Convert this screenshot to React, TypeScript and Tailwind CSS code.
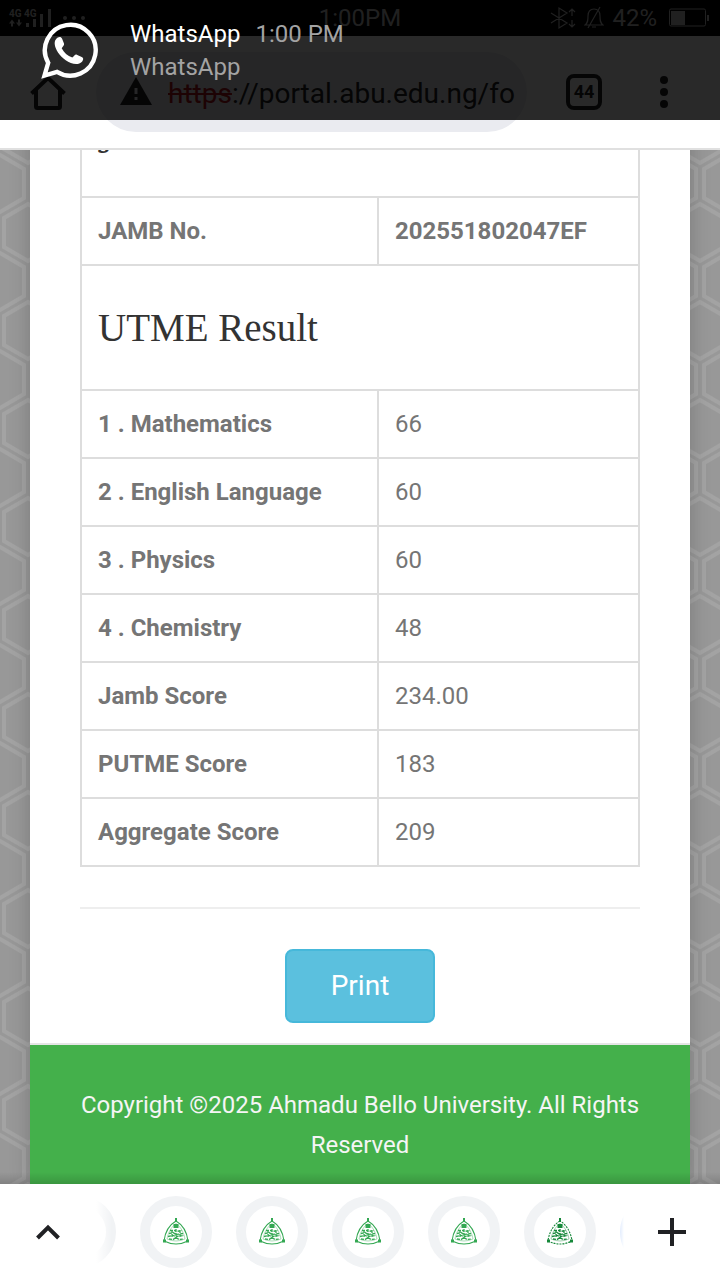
import React from "react";

const results: { label: string; value: string }[] = [
  { label: "1 . Mathematics", value: "66" },
  { label: "2 . English Language", value: "60" },
  { label: "3 . Physics", value: "60" },
  { label: "4 . Chemistry", value: "48" },
  { label: "Jamb Score", value: "234.00" },
  { label: "PUTME Score", value: "183" },
  { label: "Aggregate Score", value: "209" },
];

function SignalIcon() {
  return (
    <svg width="80" height="24" viewBox="0 0 80 24" aria-hidden="true" fill="#c4c4c4">
      <text x="1" y="11" fontSize="10" fontWeight="700" fontFamily="Roboto, sans-serif">4G</text>
      <text x="16" y="11" fontSize="10" fontWeight="700" fontFamily="Roboto, sans-serif">4G</text>
      <path d="M4 13.500l-3 4h2v3h2v-3h2zM11 20.500l3-4h-2v-3h-2v3h-2z" />
      <path d="M18 17h3v4h-3zM25 13h3v8h-3zM32 8h3v13h-3zM40 3h3v18h-3z" />
      <circle cx="57" cy="12" r="2" />
      <circle cx="66" cy="12" r="2" />
      <circle cx="75" cy="12" r="2" />
    </svg>
  );
}

function StatusBar() {
  return (
    <div className="grid h-9 grid-cols-[1fr_auto_1fr] items-center bg-black px-2 text-2xl text-[#c4c4c4]">
      <SignalIcon />
      <span>1:00PM</span>
      <div className="flex items-center justify-end pr-[3px]">
        <svg width="26" height="24" viewBox="0 0 26 24" fill="none" stroke="#c4c4c4" strokeWidth="1.200" aria-hidden="true">
          <path d="M1 7l16 10-8 5V2l8 5L1 17M22 10V3M19 6l3-3 3 3M22 14v7M19 18l3 3 3-3" />
        </svg>
        <svg className="ml-2" width="20" height="24" viewBox="0 0 20 24" fill="none" stroke="#c4c4c4" strokeWidth="1.200" aria-hidden="true">
          <path d="M1 19c3-2 3-5 3-9 0-4 2-7 6-7s6 3 6 7c0 4 0 7 3 9zM8 21h4M4 22L16 1" />
        </svg>
        <span className="ml-2">42%</span>
        <svg className="ml-3" width="40" height="20" viewBox="0 0 40 20" fill="none" aria-hidden="true">
          <rect x="0.500" y="1" width="36" height="17" rx="1.500" stroke="#c4c4c4" />
          <path d="M2 3h14v14H2zM38 7h2v6h-2z" fill="#c4c4c4" />
        </svg>
      </div>
    </div>
  );
}

function Toolbar() {
  return (
    <header className="flex h-[114px] items-center border-b-2 border-[#e0e0e0] bg-white text-[#202124]">
      <button type="button" aria-label="Home" className="flex w-24 shrink-0 justify-center">
        <svg width="36" height="36" viewBox="0 0 36 36" fill="none" stroke="#202124" strokeWidth="4">
          <path d="M1.500 19.500L18 4l16.500 15.500" />
          <path d="M6 16v16.500q0 1.500 1.500 1.500h21q1.500 0 1.500-1.500V16" />
        </svg>
      </button>
      <div className="flex h-20 min-w-0 flex-1 items-center rounded-full bg-[#eaebf0] pl-6 pr-3">
        <svg className="shrink-0" width="32" height="32" viewBox="0 0 32 32" aria-hidden="true">
          <path d="M16 1L32 29H0z" fill="#202124" />
          <path d="M14.500 12h3v6h-3zM14.500 21h3v3h-3z" fill="#eaebf0" />
        </svg>
        <a href="#portal" className="ml-4 overflow-hidden whitespace-nowrap pt-1 text-[28px] leading-10 text-[#202124]">
          <span className="text-[#b3141a] line-through">https</span>://portal.abu.edu.ng/fo
        </a>
      </div>
      <button type="button" aria-label="Tabs" className="ml-[39px] flex size-9 shrink-0 items-center justify-center rounded-lg border-4 border-[#202124] text-lg font-bold">
        44
      </button>
      <button type="button" aria-label="Menu" className="ml-[38px] mr-8 flex w-12 shrink-0 justify-center">
        <svg width="8" height="32" viewBox="0 0 8 32" fill="#202124">
          <circle cx="4" cy="4" r="4" />
          <circle cx="4" cy="16" r="4" />
          <circle cx="4" cy="28" r="4" />
        </svg>
      </button>
    </header>
  );
}

function Notification() {
  return (
    <aside className="absolute inset-x-0 top-0 flex h-[120px] items-start bg-black/84 pl-[39px] pt-[18px]">
      <svg className="mt-[2px]" width="60" height="60" viewBox="0 0 60 60" fill="none" aria-hidden="true">
        <path d="M5.500 55.500L9.200 42.800A25.400 25.400 0 1 1 18 51.900z" stroke="#fff" strokeWidth="4.400" />
        <path
          d="M18.800 17.600c1.700-1.200 3.400-.8 4.300 1.200l1.900 4.600c.7 1.900-1.700 3.300-2.300 4.800 2.200 4.500 5.800 7.600 10.600 9.400 1.500-.8 2.600-3.500 4.500-2.900l5.400 2.600c1.700.9.900 3.200-.2 4.400-3 3-7.200 2.700-11.200 1.200C24.500 39.900 19.400 34.600 16.700 28c-1.500-3.900-1.700-7.900 2.100-10.400z"
          fill="#fff"
        />
      </svg>
      <div className="ml-[31px] text-2xl leading-[33px] text-[#a3a3a3]">
        <p>
          <span className="text-white">WhatsApp</span>
          <span className="ml-[15px]">1:00 PM</span>
        </p>
        <p>WhatsApp</p>
      </div>
    </aside>
  );
}

function HexBackground() {
  return (
    <svg className="absolute inset-0 size-full" aria-hidden="true">
      <defs>
        <pattern id="hex" width="56" height="98" patternUnits="userSpaceOnUse">
          <g fill="none" stroke="#a3a3a3" strokeWidth="4">
            <path d="M0 5l24 14v29L0 62l-24-14V19z" />
            <path d="M56 5l24 14v29L56 62 32 48V19z" />
            <path d="M28 54l24 14v29l-24 14L4 97V68z" />
            <path d="M28-44l24 14v29L28 13 4-1v-29z" />
          </g>
        </pattern>
      </defs>
      <rect width="100%" height="100%" fill="#989898" />
      <rect width="100%" height="100%" fill="url(#hex)" />
    </svg>
  );
}

const headingCell = "h-[125px] border-2 border-[#ddd] px-4 text-left align-middle";
const cell = "border-2 border-[#ddd] px-4 py-4 text-left";

function ResultTable() {
  return (
    <table className="w-full border-collapse text-2xl leading-[34px] text-[#757575]">
      <colgroup>
        <col className="w-[297px]" />
        <col />
      </colgroup>
      <tbody>
        <tr>
          <th colSpan={2} className={headingCell}>
            <h3 className="pl-[3px] font-['DejaVu_Serif',serif] text-[32px] font-normal leading-10 text-[#333]">JAMB</h3>
          </th>
        </tr>
        <tr>
          <th className={cell}>JAMB No.</th>
          <td className={`${cell} font-bold`}>202551802047EF</td>
        </tr>
        <tr>
          <th colSpan={2} className={headingCell}>
            <h3 className="font-['Liberation_Serif',serif] text-[39px] font-normal leading-10 text-[#333]">UTME Result</h3>
          </th>
        </tr>
        {results.map((r) => (
          <tr key={r.label}>
            <th className={cell}>{r.label}</th>
            <td className={cell}>{r.value}</td>
          </tr>
        ))}
      </tbody>
    </table>
  );
}

function Crest({ dark = false }: { dark?: boolean }) {
  const c = dark ? "#16883a" : "#34a853";
  return (
    <svg width="28" height="28" viewBox="0 0 28 28" fill="none" stroke={c} aria-hidden="true">
      <path d="M14 3C7 7 3 15 2 23q12 6 24 0C25 15 21 7 14 3z" strokeWidth="1.100" strokeDasharray={dark ? "2 1" : undefined} />
      <path d="M14 5.500C9 9 6 15 5 21q9 4 18 0C22 15 19 9 14 5.500z" strokeWidth="0.400" />
      <path d="M13 0h2v4h-2zM11.500 6h5v4h-5zM1 21.500h3v3H1zM24 21.500h3v3h-3z" fill={c} stroke="none" />
      <path d="M8 12.500h5l1 1 6-1M7 15.500l4-1 3 2 7-1M6 18.500l5-1 3 1 8-1M7 21l4 .5 3-2 3 2 4-.5M10 12v8M14 11v10M18 12v8" strokeWidth="1.300" strokeDasharray="3 1" />
    </svg>
  );
}

function TabStrip() {
  return (
    <nav className="relative flex h-24 items-center bg-white">
      <button type="button" aria-label="Show tabs" className="flex w-24 shrink-0 justify-center">
        <svg width="26" height="18" viewBox="0 0 26 18" fill="none" stroke="#202124" strokeWidth="4">
          <path d="M2.500 15L13 4.500 23.500 15" />
        </svg>
      </button>
      <div className="relative min-w-0 flex-1 overflow-hidden">
        <div className="-ml-[52px] flex gap-6">
          {[0, 1, 2, 3, 4, 5].map((i) => (
            <button key={i} type="button" aria-label={`Tab ${i + 1}`} className="flex size-[72px] shrink-0 items-center justify-center rounded-full border-[10px] border-[#f1f3f5]">
              <Crest dark={i === 5} />
            </button>
          ))}
          <button type="button" aria-label="Current tab" className="size-[72px] shrink-0 rounded-full border-[10px] border-[#c6dafc]" />
        </div>
        <div className="absolute inset-y-0 left-0 w-4 bg-linear-to-r from-white to-transparent" />
        <div className="absolute inset-y-0 right-0 w-2 bg-linear-to-l from-white to-transparent" />
      </div>
      <button type="button" aria-label="New tab" className="flex w-24 shrink-0 justify-center">
        <svg width="28" height="28" viewBox="0 0 28 28" stroke="#202124" strokeWidth="4">
          <path d="M0 14h28M14 0v28" />
        </svg>
      </button>
    </nav>
  );
}

export default function App() {
  return (
    <div className="relative flex min-h-screen flex-col bg-white font-[Roboto,sans-serif]">
      <StatusBar />
      <Toolbar />
      <main className="relative flex-1 overflow-hidden">
        <HexBackground />
        <div className="relative mx-[30px] -mt-[79px] bg-white shadow-[0_0_20px_rgba(0,0,0,0.2)]">
          <section className="border-b-2 border-[#e5e5e5] px-[50px] pb-5">
            <ResultTable />
            <hr className="mt-10 border-t-2 border-[#eee]" />
            <div className="mt-10 flex justify-center">
              <button type="button" className="rounded-lg border-2 border-[#46b8da] bg-[#5bc0de] px-11 py-4 text-[28px] leading-[38px] text-white">
                Print
              </button>
            </div>
          </section>
          <footer className="bg-[#44b04b] px-10 pb-[19px] pt-10 text-center text-2xl leading-10 text-[#f5f5f5]">
            Copyright ©2025 Ahmadu Bello University. All Rights Reserved
          </footer>
        </div>
        <div className="absolute inset-x-0 bottom-0 h-3 bg-linear-to-b from-transparent to-black/15" />
      </main>
      <TabStrip />
      <Notification />
    </div>
  );
}
